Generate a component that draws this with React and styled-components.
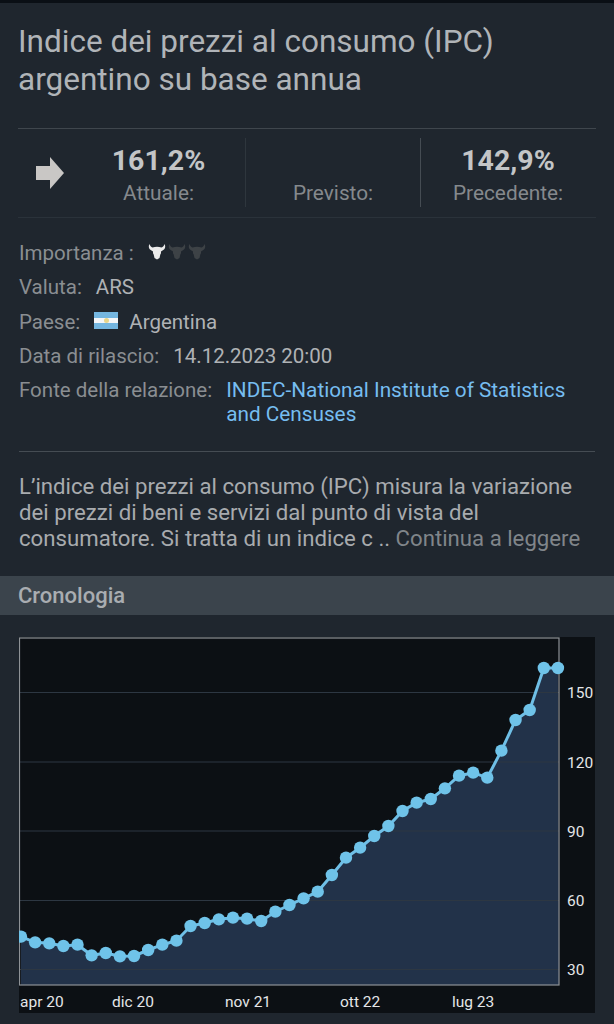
import styled, { createGlobalStyle } from "styled-components";

const POINT_Y = [950,967,970,978,974,1006,999,1009,1008,990,974,962,918,909,898,893,896,903,875,855,835,815,765,713,683,648,618,573,548,537,505,467,458,473,392,300,270,144,144];
const points = POINT_Y.map((y, i) => [21 + i * 14.13 - 19, 620 + y / 3 - 637]);
const linePath = points.map((p, i) => `${i ? "L" : "M"}${p[0].toFixed(1)} ${p[1].toFixed(1)}`).join(" ");
const areaPath = `${linePath} L540 348 L2 348 Z`;

const GRID = [
	{ label: "150", y: 55.5 },
	{ label: "120", y: 125 },
	{ label: "90", y: 194 },
	{ label: "60", y: 263.5 },
	{ label: "30", y: 332.5 },
];
const MONTHS = [
	{ label: "apr 20", x: 1 },
	{ label: "dic 20", x: 93 },
	{ label: "nov 21", x: 206 },
	{ label: "ott 22", x: 321 },
	{ label: "lug 23", x: 433 },
];

const App = () => {
	return (
		<Page>
			<GlobalStyle />
			<Title>Indice dei prezzi al consumo (IPC) argentino su base annua</Title>
			<Stats>
				<ArrowCell>
					<svg width="28" height="32" viewBox="0 0 28 32">
						<path d="M0 9H14V0L28 16L14 32V23H0Z" fill="#c9c7c5" />
					</svg>
				</ArrowCell>
				<Stat>
					<StatValue>161,2%</StatValue>
					<StatLabel>Attuale:</StatLabel>
				</Stat>
				<Stat $divider="#2e363d">
					<StatValue>&nbsp;</StatValue>
					<StatLabel>Previsto:</StatLabel>
				</Stat>
				<Stat $divider="#454c53">
					<StatValue>142,9%</StatValue>
					<StatLabel>Precedente:</StatLabel>
				</Stat>
			</Stats>
			<Details>
				<Row>
					<Label>Importanza :</Label>
					<Bulls>
						<Bull color="#ebebeb" />
						<Bull color="#3d4246" />
						<Bull color="#3d4246" />
					</Bulls>
				</Row>
				<Row>
					<Label>Valuta:</Label>
					<Value>ARS</Value>
				</Row>
				<Row>
					<Label>Paese:</Label>
					<Flag>
						<FlagDot />
					</Flag>
					<Value>Argentina</Value>
				</Row>
				<Row>
					<Label>Data di rilascio:</Label>
					<Value>14.12.2023 20:00</Value>
				</Row>
				<SourceRow>
					<Label>Fonte della relazione:</Label>
					<SourceLink>INDEC-National Institute of Statistics and Censuses</SourceLink>
				</SourceRow>
			</Details>
			<Description>
				L’indice dei prezzi al consumo (IPC) misura la variazione dei prezzi di beni e servizi dal punto di
				vista del consumatore. Si tratta di un indice c .. <More>Continua a leggere</More>
			</Description>
			<SectionBar>Cronologia</SectionBar>
			<ChartWrap>
				<svg width="576" height="376" viewBox="0 0 576 376">
					<rect width="576" height="376" fill="#0c1014" />
					<path d={areaPath} fill="#223249" />
					{GRID.map((g) => (
						<g key={g.label}>
							<line x1="1" x2="540" y1={g.y} y2={g.y} stroke="#2d3742" strokeWidth="1" />
							<AxisText x="548" y={g.y + 5.5}>
								{g.label}
							</AxisText>
						</g>
					))}
					<rect x="0.5" y="1" width="539.5" height="347" fill="none" stroke="#8e9296" strokeWidth="1.2" />
					<path d={linePath} fill="none" stroke="#6fbfe6" strokeWidth="3" />
					{points.map((p, i) => (
						<circle key={i} cx={p[0]} cy={p[1]} r="6.2" fill="#6fc3e9" />
					))}
					{MONTHS.map((m) => (
						<AxisText key={m.label} x={m.x} y="369.5">
							{m.label}
						</AxisText>
					))}
				</svg>
			</ChartWrap>
		</Page>
	);
};

const Bull = ({ color }) => (
	<svg width="18" height="16" viewBox="0 0 18 16">
		<path
			d="M1.5 0C0 2.5 1 5.5 3.5 6.5L5 7.5L5.8 11L6.5 14L9 15.5L11.5 14L12.2 11L13 7.5L14.5 6.5C17 5.5 18 2.5 16.5 0C16 2 15 3 13.5 3.5C12 3 10.5 2.8 9 2.8C7.5 2.8 6 3 4.5 3.5C3 3 2 2 1.5 0Z"
			fill={color}
		/>
		<path d="M5 5H13V9L11 12H7L5 9Z" fill={color} />
	</svg>
);

export default App;

const GlobalStyle = createGlobalStyle`
	html, body {
		margin: 0;
		padding: 0;
		background: #1f262e;
	}
`;

const Page = styled.div`
	width: 614px;
	height: 1024px;
	box-sizing: border-box;
	overflow: hidden;
	background: #1f262e;
	border-top: 3px solid #0a0f15;
	font-family: Roboto, "Liberation Sans", sans-serif;
	color: #9a9ea2;
`;

const Title = styled.h1`
	margin: 0 18px;
	padding: 20px 90px 29px 0;
	font-size: 31.5px;
	line-height: 38px;
	font-weight: 400;
	color: #b0b4b8;
	border-bottom: 1px solid #3f464d;
`;

const Stats = styled.div`
	display: grid;
	grid-template-columns: 54px 173px 175px 175px;
	margin: 0 18px;
	height: 88px;
	border-bottom: 1px solid #2a323a;
`;

const ArrowCell = styled.div`
	display: flex;
	align-items: center;
	justify-content: center;
	padding: 0 0 0 9px;
`;

const Stat = styled.div`
	display: flex;
	flex-direction: column;
	align-items: center;
	margin-top: 9px;
	height: 62px;
	padding-top: 7px;
	border-left: ${(p) => (p.$divider ? `1px solid ${p.$divider}` : "none")};
`;

const StatValue = styled.div`
	font-size: 28.5px;
	line-height: 32px;
	font-weight: 700;
	color: #c3c5c7;
`;

const StatLabel = styled.div`
	font-size: 20.8px;
	line-height: 28px;
	color: #85898d;
	margin-top: 2px;
`;

const Details = styled.div`
	margin: 0 19px;
	padding: 18px 0 25px;
	border-bottom: 1px solid #454c53;
	font-size: 20.5px;
`;

const Row = styled.div`
	display: flex;
	align-items: center;
	gap: 14px;
	height: 34.3px;
`;

const SourceRow = styled(Row)`
	align-items: flex-start;
	height: auto;
	padding-top: 5px;
	line-height: 24px;
`;

const Label = styled.span`
	color: #8a8e92;
	white-space: nowrap;
`;

const Value = styled.span`
	color: #afb2b5;
`;

const Bulls = styled.span`
	display: flex;
	gap: 2px;
	margin-top: -2px;
`;

const Flag = styled.span`
	position: relative;
	display: block;
	width: 24px;
	height: 17px;
	margin: -2px -3px 0 0;
	background: linear-gradient(#74b6e0 0 33%, #f4f6f8 33% 66%, #74b6e0 66%);
`;

const FlagDot = styled.span`
	position: absolute;
	left: 10px;
	top: 6px;
	width: 5px;
	height: 5px;
	border-radius: 50%;
	background: #e8d58a;
`;

const SourceLink = styled.a`
	color: #76bdf0;
	font-size: 20.75px;
	max-width: 345px;
`;

const Description = styled.p`
	margin: 0;
	padding: 21px 19px 0;
	height: 103px;
	font-size: 22.2px;
	line-height: 26px;
	color: #a8abae;
`;

const More = styled.span`
	color: #80858a;
`;

const SectionBar = styled.div`
	height: 39px;
	line-height: 39px;
	padding-left: 18px;
	background: #3b444c;
	font-size: 22px;
	font-weight: 500;
	color: #a9adb1;
`;

const ChartWrap = styled.div`
	padding: 22px 0 0 19px;
	svg {
		display: block;
	}
`;

const AxisText = styled.text`
	font-family: Roboto, "Liberation Sans", sans-serif;
	font-size: 15.5px;
	fill: #e4e6e8;
`;
